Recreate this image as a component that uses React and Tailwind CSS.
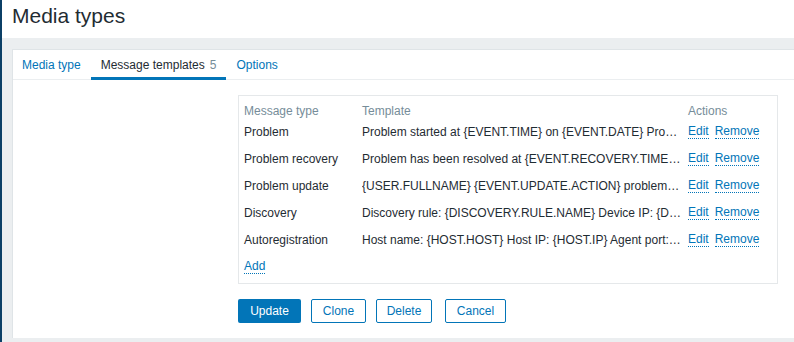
import React from "react";

const rows = [
  ["Problem", "Problem started at {EVENT.TIME} on {EVENT.DATE} Problem name: {EVENT.NAME} Host: {HOST.NAME}"],
  ["Problem recovery", "Problem has been resolved at {EVENT.RECOVERY.TIME} on {EVENT.RECOVERY.DATE}"],
  ["Problem update", "{USER.FULLNAME} {EVENT.UPDATE.ACTION} problem at {EVENT.UPDATE.DATE}"],
  ["Discovery", "Discovery rule: {DISCOVERY.RULE.NAME} Device IP: {DISCOVERY.DEVICE.IPADDRESS}"],
  ["Autoregistration", "Host name: {HOST.HOST} Host IP: {HOST.IP} Agent port: {HOST.PORT}"],
];

function Link({ children }) {
  return (
    <span className="text-[#0275b8] border-b border-dotted border-[#0275b8] leading-[14px] cursor-pointer">
      {children}
    </span>
  );
}

export default function App() {
  return (
    <div
      className="flex w-[794px] h-[342px] overflow-hidden text-[12px] text-[#1f2c33] bg-white"
      style={{ fontFamily: '"Liberation Sans", Arial, sans-serif' }}
    >
      <div className="w-[2px] shrink-0 bg-[#0b3f66]" />
      <div className="flex-1 flex flex-col min-w-0">
        <div className="h-[38px] shrink-0 bg-white pl-[10px] pt-[4px]">
          <h1 className="text-[21px] leading-[24px] text-[#1f2c33] font-normal">Media types</h1>
        </div>
        <div className="flex-1 bg-[#ebeef0] pl-[10px] pt-[11px] pb-[4px] flex flex-col">
          <div className="flex-1 bg-white border-l border-t border-[#dfe4e7] flex flex-col">
            {/* tabs */}
            <div className="h-[30px] shrink-0 flex items-stretch border-b border-[#ebeef0]">
              <div className="pl-[9px] pr-[10px] flex items-center text-[#0275b8]">Media type</div>
              <div className="px-[10px] flex items-center border-b-[3px] border-[#0275b8] pt-[3px] -mb-px">
                <span>Message templates</span>
                <span className="ml-[5px] text-[#768d99]">5</span>
              </div>
              <div className="px-[10px] flex items-center text-[#0275b8]">Options</div>
            </div>
            {/* form */}
            <div className="flex pt-[15px]">
              <div className="w-[225px] shrink-0" />
              <div className="flex flex-col">
                <div className="w-[540px] border border-[#e5e8ea] pl-[5px] pb-[3px]">
                  <div className="flex h-[22px] pt-[8px] leading-[14px] text-[#768d99]">
                    <div className="w-[118px]">Message type</div>
                    <div className="w-[326px]">Template</div>
                    <div>Actions</div>
                  </div>
                  {rows.map(([t, tpl]) => (
                    <div key={t} className="flex h-[27px] items-center leading-[14px]">
                      <div className="w-[118px] shrink-0">{t}</div>
                      <div className="w-[320px] shrink-0 mr-[6px] overflow-hidden whitespace-nowrap text-ellipsis">
                        {tpl}
                      </div>
                      <div className="flex gap-[6px] whitespace-nowrap">
                        <Link>Edit</Link>
                        <Link>Remove</Link>
                      </div>
                    </div>
                  ))}
                  <div className="flex h-[27px] items-center">
                    <Link>Add</Link>
                  </div>
                </div>
                <div className="flex mt-[15px]">
                  <button className="h-[24px] w-[63px] rounded-[2px] bg-[#0275b8] text-white text-[12px] flex items-center justify-center">
                    Update
                  </button>
                  <button className="ml-[10px] h-[24px] w-[55px] rounded-[2px] border border-[#0275b8] text-[#0275b8] bg-white text-[12px] flex items-center justify-center">
                    Clone
                  </button>
                  <button className="ml-[10px] h-[24px] w-[56px] rounded-[2px] border border-[#0275b8] text-[#0275b8] bg-white text-[12px] flex items-center justify-center">
                    Delete
                  </button>
                  <button className="ml-[13px] h-[24px] w-[61px] rounded-[2px] border border-[#0275b8] text-[#0275b8] bg-white text-[12px] flex items-center justify-center">
                    Cancel
                  </button>
                </div>
              </div>
            </div>
          </div>
        </div>
      </div>
    </div>
  );
}
